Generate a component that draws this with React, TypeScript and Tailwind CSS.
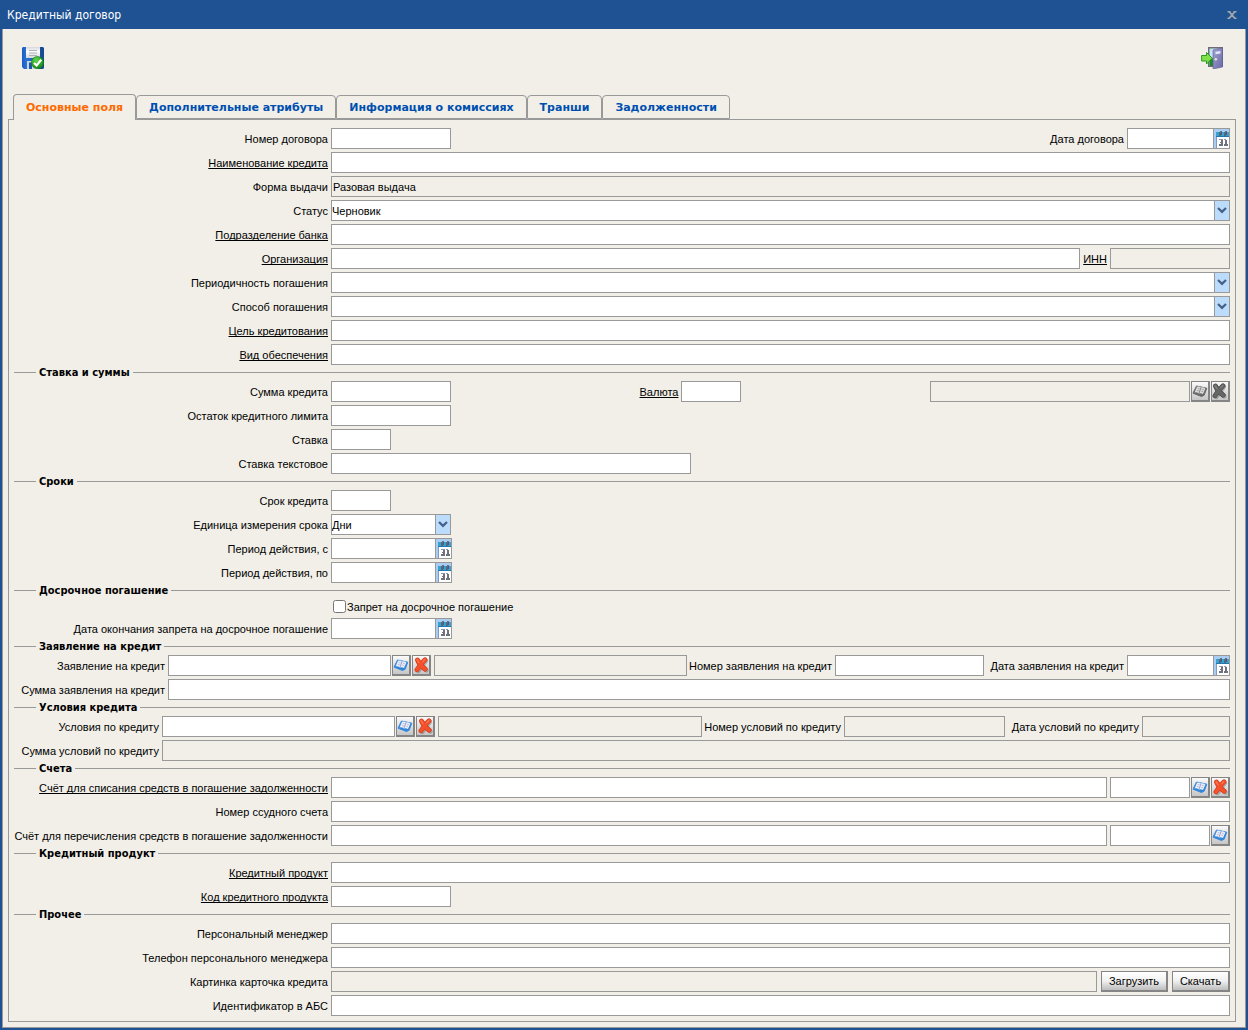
import React from 'react'

type Kids = { children?: React.ReactNode }

const SaveIcon = () => (
    <svg viewBox="0 0 22 22" className="h-[22px] w-[22px]">
        <defs>
            <linearGradient id="disk" x1="0" x2="1" y1="0" y2="0">
                <stop offset="0" stopColor="#1a5cc4" />
                <stop offset="0.2" stopColor="#2a74d4" />
                <stop offset="1" stopColor="#16468f" />
            </linearGradient>
            <linearGradient id="paper" x1="0" x2="0" y1="0" y2="1">
                <stop offset="0" stopColor="#d6d6da" />
                <stop offset="0.4" stopColor="#ffffff" />
                <stop offset="1" stopColor="#d4d6dc" />
            </linearGradient>
            <radialGradient id="ok" cx="0.4" cy="0.3" r="0.8">
                <stop offset="0" stopColor="#5fd84a" />
                <stop offset="1" stopColor="#0c7d12" />
            </radialGradient>
        </defs>
        <path d="M1 0H21L22 1V21L21 22H2L0 20V1Z" fill="url(#disk)" />
        <path d="M4 0H18V11H4Z" fill="url(#paper)" />
        <path d="M7 3.500H15M7 6H15M7 8.500H15" stroke="#b0b0b8" strokeWidth="1" />
        <path d="M5 14H16V22H5Z" fill="#cdd6e4" />
        <path d="M7 15.500H10V22H7Z" fill="#1f56ab" />
        <circle cx="15.500" cy="15.600" r="6.100" fill="url(#ok)" stroke="#0d7a14" strokeWidth="0.600" />
        <path d="M12 16L14.600 18.400L19.200 12.800" fill="none" stroke="#fff" strokeWidth="2.200" />
    </svg>
)

const ExitIcon = () => (
    <svg viewBox="0 0 22 22" className="h-[22px] w-[22px]">
        <defs>
            <linearGradient id="door" x1="0" x2="1" y1="0" y2="1">
                <stop offset="0" stopColor="#a3a3d6" />
                <stop offset="1" stopColor="#6868a4" />
            </linearGradient>
        </defs>
        <path d="M7 0H22V20H7Z" fill="#6e6e78" />
        <path d="M8.500 1.500H20V19H8.500Z" fill="#c4e6f6" />
        <path d="M8.500 12L13 11V19H8.500Z" fill="#1f8c2c" />
        <path d="M12 3L21.500 0.800V20L12 22Z" fill="url(#door)" stroke="#5d5d92" strokeWidth="0.600" />
        <path d="M14.500 4.800L19.500 4V6.600L14.500 7.200Z" fill="#e6e6fa" />
        <circle cx="14.800" cy="12.300" r="1.300" fill="#e4e4d0" />
        <path d="M0.600 8.500H5.500V5.500L11.200 11.200L5.500 17V14H0.600Z" fill="#7fe04a" stroke="#2a9a1e" strokeWidth="1" />
    </svg>
)

const CalendarIcon = () => (
    <svg viewBox="0 0 15 19" className="h-[19px] w-[15px]" shapeRendering="crispEdges">
        <path d="M0 0H15V19H0Z" fill="#a9cdf3" />
        <path d="M2 3H15V8H2Z" fill="#35a3cf" />
        <path d="M2 7H15V8H2Z" fill="#2277b0" />
        <path d="M3 8H15V19H3Z" fill="#fff" />
        <path d="M2 8H3V19H2Z" fill="#7d99c4" />
        <path d="M5 3H7V7H5ZM10 3H12V7H10Z" fill="#4f6a80" />
        <path d="M6 2H8V4H6ZM11 2H13V4H11Z" fill="#5f7388" />
        <path d="M7 3H8V6H7ZM12 3H13V6H12Z" fill="#6b4a70" />
        <path d="M5 10H9V11H5ZM10 10H12V11H10Z" fill="#8c93a6" />
        <path d="M7 11H9V13H7ZM6 13H9V14H6ZM7 14H9V17H7ZM5 15H7V17H5ZM11 11H13V15H11ZM10 15H14V17H10Z" fill="#6f727c" />
    </svg>
)

const BookIcon = ({ gray }: { gray?: boolean }) => (
    <svg viewBox="0 0 16 13" className="h-[13px] w-4 shrink-0">
        <path d="M4.500 1L14.800 3.200L12.200 10.200L9.500 11.500L1 8.200Z" fill={gray ? '#6a6a6a' : '#2f86d8'} stroke={gray ? '#6a6a6a' : '#3a8ade'} strokeWidth="1" strokeLinejoin="round" />
        <path d="M5 1.800Q7.500 1 9 2.400Q11.500 2 13.400 3.600L11 9Q8.800 7.800 7 8.600Q5 7 2.600 7.400Z" fill={gray ? '#dcdcdc' : '#eceefa'} />
        <path d="M9 2.600L7 8.200" stroke={gray ? '#777' : '#9095c8'} strokeWidth="0.900" />
        <path d="M5.800 3.500L7.600 3.800M4.900 5.500L6.800 5.800M9.900 4.200L11.800 4.700M9.200 6.200L11 6.700" stroke={gray ? '#999' : '#b3b6dc'} strokeWidth="0.900" />
    </svg>
)

const CrossIcon = ({ gray }: { gray?: boolean }) => (
    <svg viewBox="0 0 17 17" className="h-[17px] w-[17px] shrink-0">
        <path d="M5.500 4.500L13.500 13.500M13 4L5.500 14" stroke="#777" strokeWidth="4.200" strokeLinecap="round" opacity="0.500" />
        <path d="M4.500 3Q6.500 8 12.200 12.200M12 2.800Q8.500 6 4 12.800" fill="none" stroke={gray ? '#474747' : '#d23a1c'} strokeWidth="4.800" strokeLinecap="round" />
        <path d="M4.500 3Q6.500 8 12.200 12.200M12 2.800Q8.500 6 4 12.800" fill="none" stroke={gray ? '#666' : '#f4502a'} strokeWidth="3.600" strokeLinecap="round" />
        <path d="M4.200 2.600L6 5.600M11.800 2.400L9.800 4.600" fill="none" stroke={gray ? '#808080' : '#ff7650'} strokeWidth="1.300" strokeLinecap="round" />
    </svg>
)

const Row = ({ children }: Kids) => <div className="flex min-h-[21px] gap-[3px]">{children}</div>

const Label = ({ id, link, w = 'w-[314px]', children }: Kids & { id: string; link?: boolean; w?: string }) => (
    <label
        htmlFor={id}
        className={`flex shrink-0 items-center justify-end whitespace-nowrap pt-px ${w} ${link ? 'underline [text-decoration-skip-ink:none]' : ''}`}
    >
        {children}
    </label>
)

const Field = ({ id, w = 'flex-1', off, value, label }: { id: string; w?: string; off?: boolean; value?: string; label?: string }) => (
    <input
        id={id}
        type="text"
        aria-label={label}
        readOnly={off}
        defaultValue={value}
        className={`h-[21px] min-w-0 rounded-none border border-[#999] px-px pt-px outline-none ${off ? 'bg-[#f1efe8]' : 'bg-white'} ${w}`}
    />
)

const DateField = ({ id, w = 'w-[121px]' }: { id: string; w?: string }) => (
    <div className={`flex h-[21px] shrink-0 border border-[#999] bg-white ${w}`}>
        <input id={id} type="text" className="min-w-0 flex-1 px-px outline-none" />
        <button type="button" aria-label="Календарь" className="shrink-0 border-l border-[#999]">
            <CalendarIcon />
        </button>
    </div>
)

const Select = ({ id, w = 'flex-1', options }: { id: string; w?: string; options: string[] }) => (
    <div className={`relative h-[21px] border border-[#999] bg-white ${w}`}>
        <select id={id} className="block h-full w-full appearance-none rounded-none pt-px pr-4 outline-none">
            {options.map((o) => (
                <option key={o}>{o}</option>
            ))}
        </select>
        <span className="pointer-events-none absolute inset-y-0 right-0 flex w-[15px] items-center justify-center border-l border-[#999] bg-[#bbdcfb]">
            <svg viewBox="0 0 10 7" className="h-[7px] w-[10px]">
                <path d="M1 1L5 4.800L9 1" fill="none" stroke="#45618c" strokeWidth="2.300" />
            </svg>
        </span>
    </div>
)

const IconButton = ({ label, children }: Kids & { label: string }) => (
    <button
        type="button"
        aria-label={label}
        className="flex h-[21px] w-[19px] shrink-0 items-center justify-center overflow-hidden border border-r-2 border-b-2 border-[#858585] bg-linear-to-b from-[#fafafa] to-[#c6c6c6]"
    >
        {children}
    </button>
)

const Section = ({ title, children }: Kids & { title: string }) => (
    <fieldset className="min-w-0">
        <legend className="flex h-4 w-full items-center gap-[3px] font-['DejaVu_Sans_Condensed','DejaVu_Sans',sans-serif] font-bold">
            <span className="mb-px h-px w-[22px] bg-[#999]" />
            {title}
            <span className="mb-px h-px flex-1 bg-[#999]" />
        </legend>
        <div className="flex flex-col gap-[3px]">{children}</div>
    </fieldset>
)

const Plain = ({ id, label, link, w, off }: { id: string; label: string; link?: boolean; w?: string; off?: boolean }) => (
    <Row>
        <Label id={id} link={link}>{label}</Label>
        <Field id={id} w={w} off={off} />
    </Row>
)

const tabs = ['Основные поля', 'Дополнительные атрибуты', 'Информация о комиссиях', 'Транши', 'Задолженности']

const pushButton = 'h-[21px] shrink-0 border border-r-2 border-b-2 border-[#858585] bg-linear-to-b from-white via-[#f0f0f0] to-[#bdbdbd]'

const App = () => {
    const [tab, setTab] = React.useState(0)

    return (
        <div className="min-h-screen bg-[#1e5292] px-[2px] pb-[2px] font-['Liberation_Sans',Arial,sans-serif] text-[11px] leading-4 text-black">
            <header className="flex h-[29px] items-center justify-between pr-[9px] pl-[5px]">
                <h1 className="font-['DejaVu_Sans_Condensed','DejaVu_Sans',sans-serif] text-xs text-white">Кредитный договор</h1>
                <button type="button" aria-label="Закрыть">
                    <svg viewBox="0 0 10 8" className="h-2 w-[10px]">
                        <path d="M2 0.500L8 7.500M8 0.500L2 7.500M0.500 0.600H3.500M6.500 0.600H9.500M0.500 7.400H3.500M6.500 7.400H9.500" stroke="#a3a7ac" strokeWidth="1.800" />
                    </svg>
                </button>
            </header>

            <main className="border-x border-b border-[#999] bg-[#f1efe8] pr-[9px] pb-[5px] pl-[5px]">
                <div className="flex justify-between pt-[18px] pr-[13px] pb-[25px] pl-[14px]">
                    <button type="button" aria-label="Сохранить"><SaveIcon /></button>
                    <button type="button" aria-label="Выйти"><ExitIcon /></button>
                </div>

                <div role="tablist" className="flex items-end pl-[5px] font-['DejaVu_Sans',sans-serif] font-bold">
                    {tabs.map((t, i) => (
                        <button
                            key={t}
                            type="button"
                            role="tab"
                            aria-selected={tab === i}
                            onClick={() => setTab(i)}
                            className={
                                tab === i
                                    ? 'relative z-10 -mb-px h-[26px] rounded-t border border-b-0 border-[#999] bg-[#f1efe8] px-3 text-[#ff6a00]'
                                    : 'h-6 rounded-t border border-[#999] px-3 pt-px text-[#004fb0]'
                            }
                        >
                            {t}
                        </button>
                    ))}
                </div>

                <form className="border border-[#999] px-[5px] pt-2 pb-[5px]">
                    <div className="flex flex-col gap-[3px]">
                        <Row>
                            <Label id="number">Номер договора</Label>
                            <Field id="number" w="w-[120px]" />
                            <Label id="date" w="ml-auto">Дата договора</Label>
                            <DateField id="date" w="w-[103px]" />
                        </Row>
                        <Plain id="name" label="Наименование кредита" link />
                        <Row>
                            <Label id="form">Форма выдачи</Label>
                            <Field id="form" off value="Разовая выдача" />
                        </Row>
                        <Row>
                            <Label id="status">Статус</Label>
                            <Select id="status" options={['Черновик']} />
                        </Row>
                        <Plain id="branch" label="Подразделение банка" link />
                        <Row>
                            <Label id="org" link>Организация</Label>
                            <Field id="org" />
                            <Label id="inn" link w="">ИНН</Label>
                            <Field id="inn" off w="w-[120px]" />
                        </Row>
                        <Row>
                            <Label id="period">Периодичность погашения</Label>
                            <Select id="period" options={['']} />
                        </Row>
                        <Row>
                            <Label id="method">Способ погашения</Label>
                            <Select id="method" options={['']} />
                        </Row>
                        <Plain id="purpose" label="Цель кредитования" link />
                        <Plain id="security" label="Вид обеспечения" link />
                    </div>

                    <Section title="Ставка и суммы">
                        <Row>
                            <Label id="sum">Сумма кредита</Label>
                            <Field id="sum" w="w-[120px]" />
                            <Label id="currency" link w="ml-auto">Валюта</Label>
                            <Field id="currency" w="w-[60px]" />
                            <div className="ml-auto flex gap-px">
                                <Field id="currencyName" off w="w-[260px]" label="Название валюты" />
                                <IconButton label="Выбрать валюту"><BookIcon gray /></IconButton>
                                <IconButton label="Очистить валюту"><CrossIcon gray /></IconButton>
                            </div>
                        </Row>
                        <Plain id="limit" label="Остаток кредитного лимита" w="w-[120px]" />
                        <Plain id="rate" label="Ставка" w="w-[60px]" />
                        <Plain id="rateText" label="Ставка текстовое" w="w-[360px]" />
                    </Section>

                    <Section title="Сроки">
                        <Plain id="term" label="Срок кредита" w="w-[60px]" />
                        <Row>
                            <Label id="unit">Единица измерения срока</Label>
                            <Select id="unit" w="w-[120px]" options={['Дни', 'Месяцы']} />
                        </Row>
                        <Row>
                            <Label id="from">Период действия, с</Label>
                            <DateField id="from" />
                        </Row>
                        <Row>
                            <Label id="to">Период действия, по</Label>
                            <DateField id="to" />
                        </Row>
                    </Section>

                    <Section title="Досрочное погашение">
                        <div className="flex h-4 items-center pl-[319px]">
                            <input id="ban" type="checkbox" className="mb-[2px] h-[13px] w-[13px]" />
                            <label htmlFor="ban" className="pl-px">Запрет на досрочное погашение</label>
                        </div>
                        <Row>
                            <Label id="banEnd">Дата окончания запрета на досрочное погашение</Label>
                            <DateField id="banEnd" />
                        </Row>
                    </Section>

                    <Section title="Заявление на кредит">
                        <Row>
                            <Label id="app" w="w-[151px]">Заявление на кредит</Label>
                            <div className="flex flex-[263] gap-px">
                                <Field id="app" />
                                <IconButton label="Выбрать заявление"><BookIcon /></IconButton>
                                <IconButton label="Очистить заявление"><CrossIcon /></IconButton>
                            </div>
                            <Field id="appName" off w="flex-[249]" label="Название заявления" />
                            <Label id="appNumber" w="w-[142px]">Номер заявления на кредит</Label>
                            <Field id="appNumber" w="w-[149px]" />
                            <Label id="appDate" w="w-[137px]">Дата заявления на кредит</Label>
                            <DateField id="appDate" w="w-[103px]" />
                        </Row>
                        <Row>
                            <Label id="appSum" w="w-[151px]">Сумма заявления на кредит</Label>
                            <Field id="appSum" />
                        </Row>
                    </Section>

                    <Section title="Условия кредита">
                        <Row>
                            <Label id="cond" w="w-[145px]">Условия по кредиту</Label>
                            <div className="flex flex-[273] gap-px">
                                <Field id="cond" />
                                <IconButton label="Выбрать условия"><BookIcon /></IconButton>
                                <IconButton label="Очистить условия"><CrossIcon /></IconButton>
                            </div>
                            <Field id="condName" off w="flex-[260]" label="Название условий" />
                            <Label id="condNumber" w="w-[136px]">Номер условий по кредиту</Label>
                            <Field id="condNumber" off w="w-[161px]" />
                            <Label id="condDate" w="w-[131px]">Дата условий по кредиту</Label>
                            <Field id="condDate" off w="w-[88px]" />
                        </Row>
                        <Row>
                            <Label id="condSum" w="w-[145px]">Сумма условий по кредиту</Label>
                            <Field id="condSum" off />
                        </Row>
                    </Section>

                    <Section title="Счета">
                        <Row>
                            <Label id="debit" link>Счёт для списания средств в погашение задолженности</Label>
                            <Field id="debit" />
                            <div className="flex w-[120px] gap-px">
                                <Field id="debitCode" label="Код счёта списания" />
                                <IconButton label="Выбрать счёт списания"><BookIcon /></IconButton>
                                <IconButton label="Очистить счёт списания"><CrossIcon /></IconButton>
                            </div>
                        </Row>
                        <Plain id="loanAccount" label="Номер ссудного счета" />
                        <Row>
                            <Label id="transfer">Счёт для перечисления средств в погашение задолженности</Label>
                            <Field id="transfer" />
                            <div className="flex w-[120px] gap-px">
                                <Field id="transferCode" label="Код счёта перечисления" />
                                <IconButton label="Выбрать счёт перечисления"><BookIcon /></IconButton>
                            </div>
                        </Row>
                    </Section>

                    <Section title="Кредитный продукт">
                        <Plain id="product" label="Кредитный продукт" link />
                        <Plain id="productCode" label="Код кредитного продукта" link w="w-[120px]" />
                    </Section>

                    <Section title="Прочее">
                        <Plain id="manager" label="Персональный менеджер" />
                        <Plain id="phone" label="Телефон персонального менеджера" />
                        <Row>
                            <Label id="card">Картинка карточка кредита</Label>
                            <div className="flex flex-1 gap-1">
                                <Field id="card" off />
                                <button type="button" className={`w-[67px] ${pushButton}`}>Загрузить</button>
                                <button type="button" className={`w-[58px] ${pushButton}`}>Скачать</button>
                            </div>
                        </Row>
                        <Plain id="abs" label="Идентификатор в АБС" />
                    </Section>
                </form>
            </main>
        </div>
    )
}

export default App
